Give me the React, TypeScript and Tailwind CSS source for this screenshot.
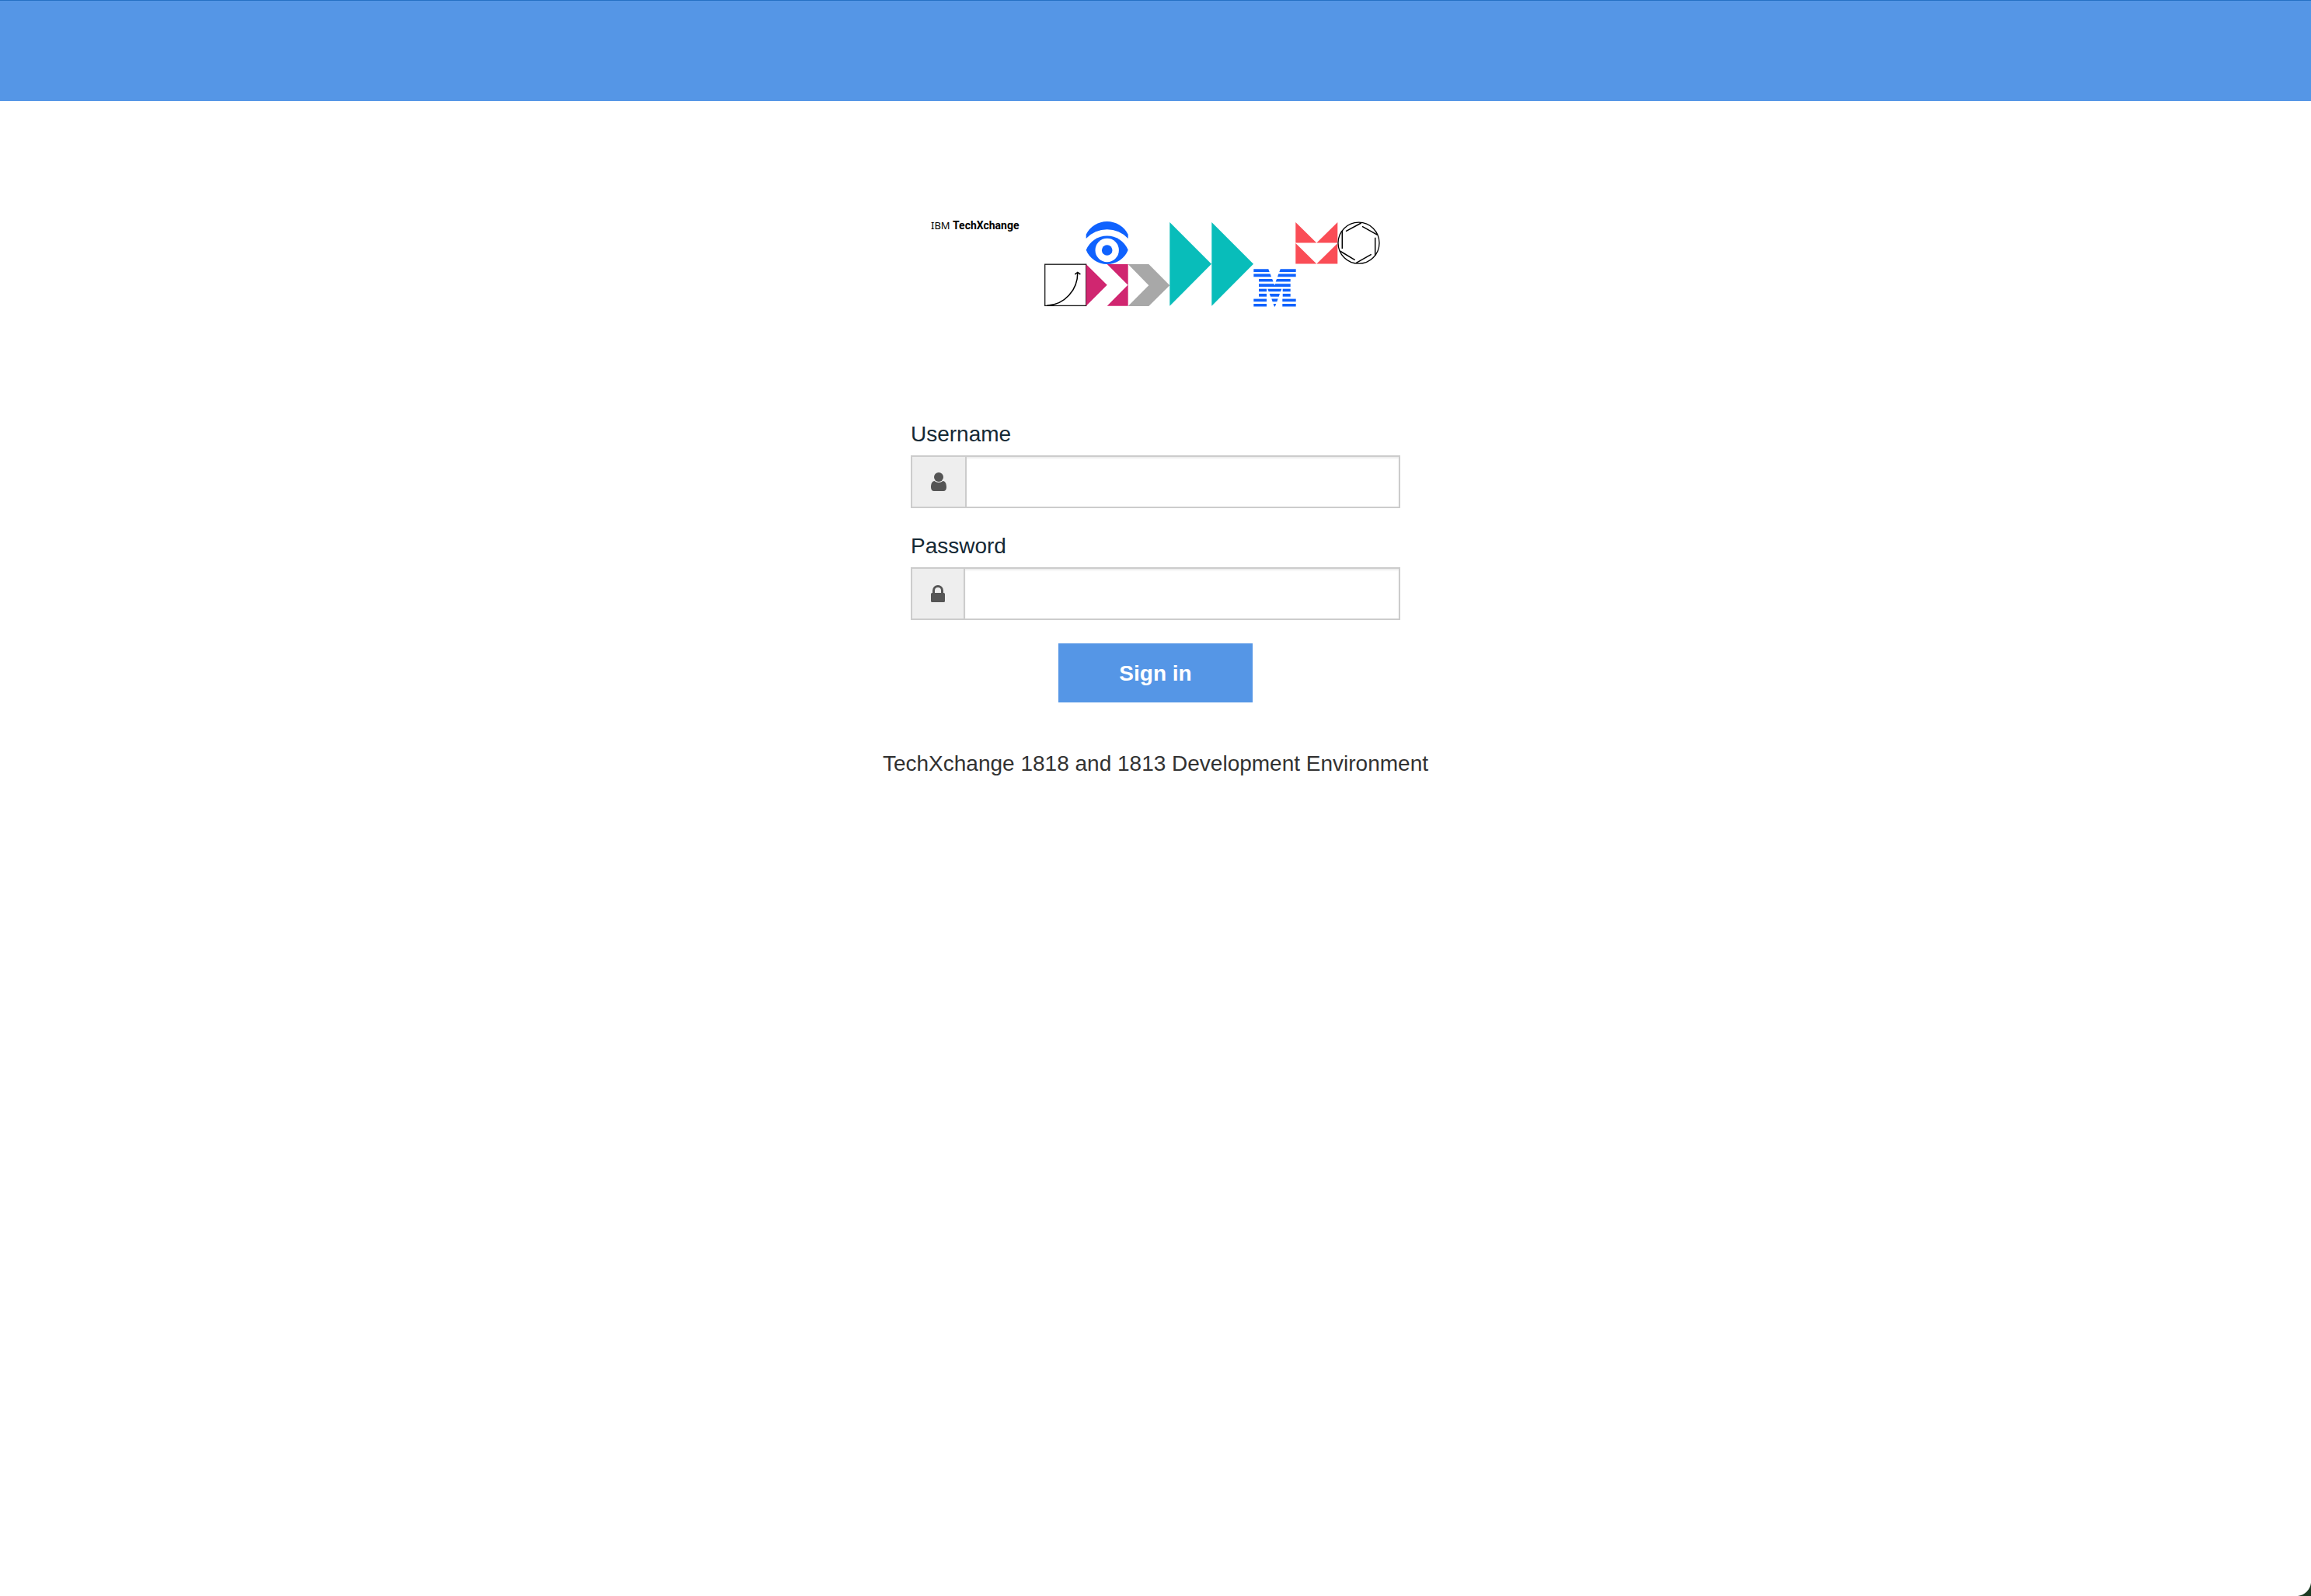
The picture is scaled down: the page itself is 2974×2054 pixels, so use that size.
import React from "react";

const stripes: string[] = [
  "426.3,66.3 445.3,66.3 446.7,70 426.3,70",
  "460.7,66.3 480.7,66.3 480.7,70 459.3,70",
  "426.3,72.6 447.7,72.6 449,76.2 426.3,76.2",
  "458.3,72.6 480.7,72.6 480.7,76.2 457,76.2",
  "433,79 450.2,79 451.5,82.6 433,82.6",
  "456,79 473.7,79 473.7,82.6 454.7,82.6",
  "433,85.3 452.5,85.3 453.3,87.3 454.1,85.3 473.7,85.3 473.7,89 433,89",
  "433,91.7 443,91.7 443,95.3 433,95.3",
  "444.3,91.7 462.3,91.7 461,95.3 445.6,95.3",
  "463.7,91.7 473.7,91.7 473.7,95.3 463.7,95.3",
  "433,98 443,98 443,101.7 433,101.7",
  "446.7,98 460,98 458.7,101.7 448,101.7",
  "463.7,98 473.7,98 473.7,101.7 463.7,101.7",
  "426.3,104.6 443,104.6 443,108.2 426.3,108.2",
  "449.3,104.6 457.6,104.6 456.3,108.2 450.6,108.2",
  "463.3,104.6 480.7,104.6 480.7,108.2 463.3,108.2",
  "426.3,111 443,111 443,114.5 426.3,114.5",
  "451.6,111 455.2,111 453.9,114.5 452.9,114.5",
  "463.3,111 480.7,111 480.7,114.5 463.3,114.5",
];

function Artwork() {
  return (
    <svg width="450" height="120" viewBox="150 0 450 120" fill="none" aria-hidden="true">
      <rect x="157.7" y="60.2" width="53" height="53.2" stroke="#161616" strokeWidth="1.3" />
      <path d="M160.3 113.3C183 112.5 200 93 199.8 71M196.3 73.2L199.8 70.5L203.4 73.2" stroke="#000" strokeWidth="1.5" />
      <path d="M210.7 21.7A30.2 30.2 0 0 1 264.7 21.7V26.9A37 37 0 0 0 210.7 26.9Z" fill="#0f62fe" />
      <path d="M210.7 41.7A29.1 29.1 0 0 1 264.7 41.7A29.1 29.1 0 0 1 210.7 41.7Z" fill="#0f62fe" />
      <circle cx="237.7" cy="42" r="15.2" fill="#fff" />
      <circle cx="237.7" cy="42" r="6.8" fill="#0f62fe" />
      <path d="M210.7 60L237.7 86.7L210.7 113.7ZM237.7 60H264.7V113.7H237.7L264.4 86.7Z" fill="#d02670" />
      <path d="M264.7 60H291.3L318.3 87.3L291.3 114H264.7L291.3 87.3Z" fill="#a8a8a8" />
      <path d="M318.3 6L372 59.7L318.3 113.7ZM372.3 6L426 59.7L372.3 113.7Z" fill="#08bdba" />
      {stripes.map((points) => (
        <polygon key={points} points={points} fill="#0f62fe" />
      ))}
      <path d="M480.3 6L507.2 32.4H480.3ZM534.3 6V32.4H507.4ZM480.3 33.1L507.2 59.4H480.3ZM534.3 33.1V59.4H507.4Z" fill="#fa4d56" />
      <circle cx="561.5" cy="32.7" r="26.5" stroke="#000" strokeWidth="1.3" />
      <path
        d="M540.3 17V40M545 17.7L564.7 7M566 11.3L585.7 22.3M582.7 25.7V48.7M577.7 47.3L558.3 58.3M556.7 54.7L537.3 43"
        stroke="#000"
        strokeWidth="1.5"
      />
    </svg>
  );
}

function UserIcon() {
  return (
    <svg width="20" height="24" viewBox="0 0 20 24" fill="#555" aria-hidden="true">
      <circle cx="10" cy="6" r="6" />
      <path d="M4.6 11C6 12.3 8 13 10 13S14 12.3 15.4 11C18.6 11.2 20 14.5 20 19C20 22 18.5 24 16 24H4C1.5 24 0 22 0 19C0 14.5 1.4 11.2 4.6 11Z" />
    </svg>
  );
}

function LockIcon() {
  return (
    <svg width="18" height="22" viewBox="0 0 18 22" fill="#555" aria-hidden="true">
      <path d="M2 10V7A7 7 0 0 1 16 7V10H16.5A1.5 1.5 0 0 1 18 11.5V20.5A1.5 1.5 0 0 1 16.5 22H1.5A1.5 1.5 0 0 1 0 20.5V11.5A1.5 1.5 0 0 1 1.5 10ZM5 10H13V7A4 4 0 0 0 5 7Z" />
    </svg>
  );
}

type FieldProps = {
  id: string;
  label: string;
  type: string;
  icon: React.ReactNode;
};

function Field({ id, label, type, icon }: FieldProps) {
  return (
    <div className="flex flex-col gap-1.5">
      <label htmlFor={id} className="self-start text-[28px] leading-[42px] text-[#152935]">
        {label}
      </label>
      <div className="flex h-17 border-2 border-[#ccc]">
        <span className="flex items-center border-r-2 border-[#ccc] bg-[#eee] px-6">{icon}</span>
        <input
          id={id}
          name={id}
          type={type}
          className="min-w-0 flex-1 bg-white px-6 text-[28px] text-[#555] shadow-[inset_0_2px_2px_rgba(0,0,0,0.075)] outline-none"
        />
      </div>
    </div>
  );
}

export default function App() {
  return (
    <div className="relative min-h-screen bg-white font-['Liberation_Sans',Arial,sans-serif]">
      <header className="h-[130px] border-t border-[#2670c4] bg-[#5596e6]" />
      <main className="flex flex-col items-center px-6 pt-[150px]">
        <div className="flex w-[600px] items-start justify-between">
          <p className="pt-0.5 pl-[11px] font-['Noto_Sans',sans-serif] text-[13px] leading-4 whitespace-nowrap text-black">
            IBM <span className="font-['Roboto',sans-serif] text-sm leading-4 font-bold">TechXchange</span>
          </p>
          <Artwork />
        </div>
        <form className="mt-[138px] flex w-full max-w-[630px] flex-col gap-7" onSubmit={(e) => e.preventDefault()}>
          <Field id="username" label="Username" type="text" icon={<UserIcon />} />
          <Field id="password" label="Password" type="password" icon={<LockIcon />} />
          <button
            type="submit"
            className="mt-0.5 h-19 w-[250px] self-center bg-[#5596e6] pt-0.5 text-[28px] font-bold text-white"
          >
            Sign in
          </button>
        </form>
        <p className="mt-[58px] text-center text-[28px] leading-[42px] text-[#323232]">
          TechXchange 1818 and 1813 Development Environment
        </p>
      </main>
      <svg className="absolute right-0 bottom-0" width="20" height="20" viewBox="0 0 20 20" aria-hidden="true">
        <path d="M20 3C19 12 12 19 3 20H20Z" fill="#1b3a22" />
      </svg>
    </div>
  );
}
